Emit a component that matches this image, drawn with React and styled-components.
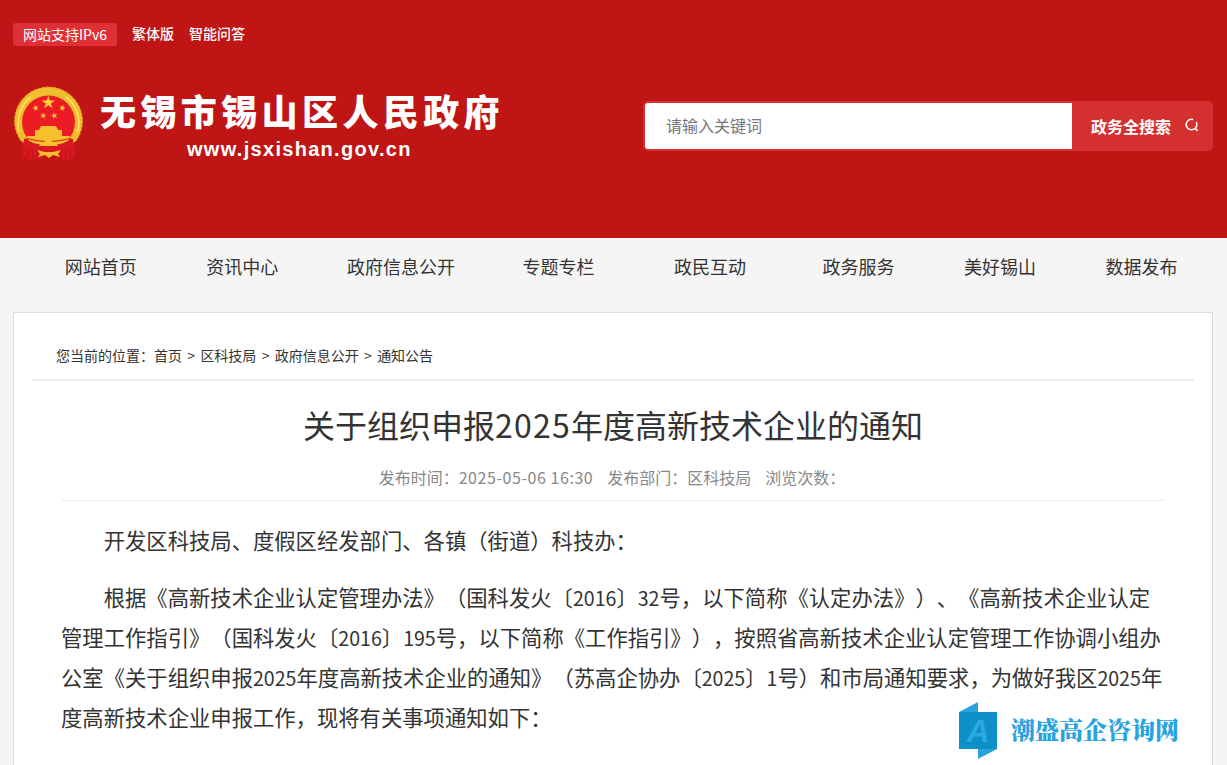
import React from "react";
import styled, { createGlobalStyle } from "styled-components";

const FONT = `"Noto Sans CJK SC", "Liberation Sans", sans-serif`;

const Global = createGlobalStyle`
  html, body { margin: 0; padding: 0; background: #f5f5f5; height: 765px; overflow: hidden; }
  body { font-family: ${FONT}; color: #333; text-spacing-trim: space-all; font-feature-settings: "chws" 0; }
  * { box-sizing: border-box; }
`;

const Page = styled.div`
  position: relative;
  width: 1227px;
  height: 765px;
  overflow: hidden;
`;
const Header = styled.header`
  height: 238px;
  background: #c01515;
  padding: 23px 14px 0 13px;
`;
const TopBar = styled.div`
  display: flex;
  align-items: center;
  height: 23px;
  color: #fff;
  font-size: 14px;
`;
const Badge = styled.span`
  width: 104px;
  height: 23px;
  line-height: 22px;
  text-align: center;
  background: #e03037;
  border-radius: 3px;
  margin-right: 15px;
  white-space: nowrap;
`;
const TopLink = styled.a`
  margin-right: 15px;
  line-height: 21px;
  font-weight: 500;
  margin-bottom: 2px;
`;
const Brand = styled.div`
  display: flex;
  align-items: flex-start;
  justify-content: space-between;
  margin-top: 40px;
`;
const Logo = styled.div`
  display: flex;
  align-items: flex-start;
`;
const EmblemMark = styled.svg`
  display: block;
  flex: none;
  margin-left: 1px;
`;
const LogoText = styled.div`
  margin-left: 16px;
  width: 404px;
`;
const SiteName = styled.div`
  font-size: 36px;
  font-weight: 900;
  line-height: 46px;
  color: #fff;
  letter-spacing: 4.4px;
  margin-top: 1px;
  white-space: nowrap;
`;
const SiteUrl = styled.div`
  font-family: "Liberation Sans", sans-serif;
  font-size: 20px;
  font-weight: 700;
  line-height: 24px;
  color: #fff;
  letter-spacing: 1.3px;
  padding-left: 87px;
  margin-top: 4px;
  white-space: nowrap;
`;
const Search = styled.form`
  display: flex;
  width: 570px;
  height: 50px;
  margin-top: 15px;
  background: #d3302f;
  border-radius: 5px;
  padding: 2px 0 2px 2px;
`;
const SearchInput = styled.div`
  width: 427px;
  background: #fff;
  border-radius: 3px 0 0 3px;
  color: #777;
  font-size: 16px;
  line-height: 45px;
  padding-left: 21px;
`;
const SearchButton = styled.div`
  flex: 1;
  display: flex;
  align-items: center;
  color: #fff;
  font-size: 16px;
  font-weight: 700;
  padding-left: 19px;
  svg { margin-left: 13px; margin-top: -3px; }
`;
const Nav = styled.nav`
  display: flex;
  height: 74px;
  padding-left: 30px;
  align-items: flex-start;
`;
const NavItem = styled.a`
  width: ${(p) => p.$w}px;
  font-size: 18px;
  line-height: 56px;
  text-align: center;
  color: #333;
  white-space: nowrap;
`;
const Card = styled.main`
  margin: 0 14px 0 13px;
  height: 600px;
  background: #fff;
  border: 1px solid #ddd;
  padding: 0 18px;
`;
const Crumbs = styled.div`
  height: 68px;
  padding: 32px 0 0 24px;
  border-bottom: 2px solid #eee;
  font-size: 14px;
  line-height: 20px;
  color: #333;
`;
const Sep = styled.span`
  margin: 0 5.3px;
`;
const Article = styled.article`
  padding: 0 29px;
`;
const Title = styled.h1`
  margin: 20px 0 0;
  font-size: 32px;
  font-weight: 400;
  line-height: 46px;
  text-align: center;
  color: #333;
`;
const Meta = styled.div`
  display: flex;
  justify-content: center;
  gap: 14px;
  height: 41px;
  margin-top: 13px;
  padding-right: 2px;
  font-size: 16px;
  line-height: 34px;
  color: #888;
  border-bottom: 1px solid #eee;
`;
const Num = styled.span`
  letter-spacing: ${(p) => p.$ls}px;
`;
const BodyNum = styled.span`
  font-size: 19.6px;
  line-height: 0;
`;
const Para = styled.p`
  margin: 0 0 17px;
  font-size: 21.33px;
  line-height: 40px;
  text-indent: 2em;
  color: #333;
  &:first-of-type { margin-top: 19px; }
`;
const Watermark = styled.div`
  position: absolute;
  left: 959px;
  top: 702px;
  display: flex;
  align-items: center;
  gap: 14px;
`;
const WatermarkMark = styled.svg`
  flex: none;
`;
const WatermarkText = styled.span`
  font-family: "Noto Serif CJK SC", serif;
  font-size: 24px;
  font-weight: 900;
  line-height: 34px;
  margin-top: -3px;
  color: #29a3df;
  white-space: nowrap;
`;

const star = (cx, cy, r, rot = 0) => {
  const pts = [];
  for (let i = 0; i < 10; i++) {
    const a = ((-90 + rot + i * 36) * Math.PI) / 180;
    const rr = i % 2 ? r * 0.38 : r;
    pts.push(`${(cx + rr * Math.cos(a)).toFixed(2)},${(cy + rr * Math.sin(a)).toFixed(2)}`);
  }
  return pts.join(" ");
};

const Emblem = () => (
  <EmblemMark width="70" height="74" viewBox="0 0 70 74">
    <path d="M7 55A34 34 0 1 1 62 55C56 60 50 61 34.500 61S13 60 7 55Z" fill="#f0bd2d" />
    <path d="M7 55A34 34 0 1 1 62 55" fill="none" stroke="#dda21c" strokeWidth="1" strokeDasharray="2 2" />
    <path d="M5 46C2 33 6 19 17 11" fill="none" stroke="#ffdc66" strokeWidth="1.6" />
    <path d="M64 46C67 33 63 19 52 11" fill="none" stroke="#ffdc66" strokeWidth="1.6" />
    <circle cx="34.5" cy="36" r="26.5" fill="#ec1c24" />
    <polygon points={star(34.3, 16.7, 7)} fill="#fbd335" />
    <polygon points={star(21.7, 22, 3.4, -15)} fill="#fbd335" />
    <polygon points={star(48.3, 22, 3.4, 15)} fill="#fbd335" />
    <polygon points={star(29.3, 29.7, 3.4, 15)} fill="#fbd335" />
    <polygon points={star(40.3, 29.7, 3.4, -15)} fill="#fbd335" />
    <path d="M27 40h15l2 4h4v6H21v-6h4z" fill="#f5c02c" />
    <path d="M10 53C20 50 49 50 59 53l1 8-4 5H13l-4-5z" fill="#d8171f" />
    <path d="M13 50h43v2c-8 2-14 3-21.500 3S21 54 13 52z" fill="#f5c02c" />
    <path d="M14 53c7 2 12 3 20.500 3S48 55 55 53l-1 2c-6 3-12 4-19.500 4S21 58 15 55z" fill="#f0bd2d" />
    <path d="M25 60l2-3 2 0 2-2 3.500-1 3.500 1 2 2 2 0 2 3z" fill="#f5c02c" />
    <path d="M8 60l20 3v10l-15 1-4-5z" fill="#d8171f" />
    <path d="M62 60l-20 3v10l15 1 4-5z" fill="#d8171f" />
    <path d="M13 63l1 10M18 63l1 10M23 64v9M57 63l-1 10M52 63l-1 10M47 64v9" stroke="#a80f16" strokeWidth="0.7" />
    <path d="M23 64l8 2h8l8-2-3 4 2 3-7-2-4 3-4-3-7 2 2-3z" fill="#f5c02c" />
  </EmblemMark>
);

const SearchIcon = () => (
  <svg width="16" height="16" viewBox="0 0 16 16">
    <circle cx="7.5" cy="7.5" r="5.3" fill="none" stroke="#fff" strokeWidth="1.6" strokeDasharray="26 4" />
    <path d="M11.3 11.5l2.400 2.400" stroke="#fff" strokeWidth="1.6" />
  </svg>
);

const WatermarkLogo = () => (
  <WatermarkMark width="38" height="57" viewBox="0 0 38 57">
    <path d="M0 10L19 0v10z" fill="#29a3df" />
    <path d="M19 47h19L19 57z" fill="#29a3df" />
    <rect x="0" y="10" width="38" height="37" fill="#0d8fc8" />
    <text x="19" y="40" textAnchor="middle" fontFamily="Liberation Sans" fontWeight="700" fontStyle="italic" fontSize="31" fill="#2ea7e3">A</text>
  </WatermarkMark>
);

const NAV = [
  ["网站首页", 141.5],
  ["资讯中心", 141.5],
  ["政府信息公开", 176],
  ["专题专栏", 139],
  ["政民互动", 164],
  ["政务服务", 133],
  ["美好锡山", 150],
  ["数据发布", 133],
];

export default function App() {
  return (
    <Page>
      <Global />
      <Header>
        <TopBar>
          <Badge>网站支持IPv6</Badge>
          <TopLink>繁体版</TopLink>
          <TopLink>智能问答</TopLink>
        </TopBar>
        <Brand>
          <Logo>
            <Emblem />
            <LogoText>
              <SiteName>无锡市锡山区人民政府</SiteName>
              <SiteUrl>www.jsxishan.gov.cn</SiteUrl>
            </LogoText>
          </Logo>
          <Search>
            <SearchInput>请输入关键词</SearchInput>
            <SearchButton>
              政务全搜索
              <SearchIcon />
            </SearchButton>
          </Search>
        </Brand>
      </Header>
      <Nav>
        {NAV.map(([label, w]) => (
          <NavItem key={label} $w={w}>{label}</NavItem>
        ))}
      </Nav>
      <Card>
        <Crumbs>
          您当前的位置：首页<Sep>&gt;</Sep>区科技局<Sep>&gt;</Sep>政府信息公开<Sep>&gt;</Sep>通知公告
        </Crumbs>
        <Article>
          <Title>关于组织申报<Num $ls={1.2}>2025</Num>年度高新技术企业的通知</Title>
          <Meta>
            <span>发布时间：<Num $ls={0.56}>2025-05-06 16:30</Num></span>
            <span>发布部门：区科技局</span>
            <span>浏览次数：</span>
          </Meta>
          <Para>开发区科技局、度假区经发部门、各镇（街道）科技办：</Para>
          <Para>
            根据《高新技术企业认定管理办法》（国科发火〔<BodyNum>2016</BodyNum>〕<BodyNum>32</BodyNum>号，以下简称《认定办法》）、《高新技术企业认定管理工作指引》（国科发火〔<BodyNum>2016</BodyNum>〕<BodyNum>195</BodyNum>号，以下简称《工作指引》），按照省高新技术企业认定管理工作协调小组办公室《关于组织申报<BodyNum>2025</BodyNum>年度高新技术企业的通知》（苏高企协办〔<BodyNum>2025</BodyNum>〕<BodyNum>1</BodyNum>号）和市局通知要求，为做好我区<BodyNum>2025</BodyNum>年度高新技术企业申报工作，现将有关事项通知如下：
          </Para>
        </Article>
      </Card>
      <Watermark>
        <WatermarkLogo />
        <WatermarkText>潮盛高企咨询网</WatermarkText>
      </Watermark>
    </Page>
  );
}
